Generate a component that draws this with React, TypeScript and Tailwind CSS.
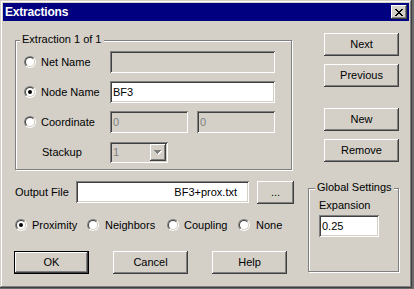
import React from "react";

const RAISED =
  "shadow-[inset_-1px_-1px_#404040,inset_1px_1px_#ffffff,inset_-2px_-2px_#808080,inset_2px_2px_#d4d0c8]";
const SUNKEN =
  "shadow-[inset_1px_1px_#808080,inset_-1px_-1px_#ffffff,inset_2px_2px_#404040,inset_-2px_-2px_#d4d0c8]";
const WINDOW =
  "shadow-[inset_-1px_-1px_#404040,inset_1px_1px_#d4d0c8,inset_-2px_-2px_#808080,inset_2px_2px_#ffffff]";
const ETCH = "shadow-[inset_1px_1px_#ffffff,1px_1px_#ffffff]";

function Radio({ checked = false }: { checked?: boolean }) {
  return (
    <div className="w-[12px] h-[12px] shrink-0 rounded-full border border-t-[#808080] border-l-[#808080] border-r-white border-b-white">
      <div className="w-full h-full rounded-full border border-t-[#404040] border-l-[#404040] border-r-[#d4d0c8] border-b-[#d4d0c8] bg-white flex items-center justify-center">
        {checked && <div className="w-[4px] h-[4px] rounded-full bg-black" />}
      </div>
    </div>
  );
}

function Btn({ label, w = "w-[75px]", def = false }: { label: string; w?: string; def?: boolean }) {
  return (
    <div
      className={`${w} h-[23px] flex items-center justify-center ${
        def ? "border border-black" : ""
      } ${RAISED}`}
    >
      <span>{label}</span>
    </div>
  );
}

function CloseX() {
  return (
    <svg width="8" height="7" viewBox="0 0 8 7" shapeRendering="crispEdges">
      <rect x="0" y="0" width="2" height="1" fill="#000" />
      <rect x="6" y="0" width="2" height="1" fill="#000" />
      <rect x="1" y="1" width="2" height="1" fill="#000" />
      <rect x="5" y="1" width="2" height="1" fill="#000" />
      <rect x="2" y="2" width="4" height="1" fill="#000" />
      <rect x="3" y="3" width="2" height="1" fill="#000" />
      <rect x="2" y="4" width="4" height="1" fill="#000" />
      <rect x="1" y="5" width="2" height="1" fill="#000" />
      <rect x="5" y="5" width="2" height="1" fill="#000" />
      <rect x="0" y="6" width="2" height="1" fill="#000" />
      <rect x="6" y="6" width="2" height="1" fill="#000" />
    </svg>
  );
}

function DownArrow() {
  return (
    <svg width="8" height="5" viewBox="0 0 8 5" shapeRendering="crispEdges">
      <rect x="1" y="1" width="7" height="1" fill="#fff" />
      <rect x="2" y="2" width="5" height="1" fill="#fff" />
      <rect x="3" y="3" width="3" height="1" fill="#fff" />
      <rect x="4" y="4" width="1" height="1" fill="#fff" />
      <rect x="0" y="0" width="7" height="1" fill="#808080" />
      <rect x="1" y="1" width="5" height="1" fill="#808080" />
      <rect x="2" y="2" width="3" height="1" fill="#808080" />
      <rect x="3" y="3" width="1" height="1" fill="#808080" />
    </svg>
  );
}

function RadioLabel({ label, checked = false }: { label: string; checked?: boolean }) {
  return (
    <div className="w-[86px] flex items-center gap-[5px]">
      <Radio checked={checked} />
      <span>{label}</span>
    </div>
  );
}

export default function App() {
  return (
    <div className="w-[414px] h-[289px] bg-[#6b6b6b] font-['Liberation_Sans',Arial,sans-serif] text-[11px] leading-[13px] text-black">
      <div className={`w-[412px] h-[288px] bg-[#d4d0c8] p-[3px] flex flex-col ${WINDOW}`}>
        {/* Title bar */}
        <div className="h-[18px] shrink-0 bg-[#000080] flex items-start justify-between">
          <span className="pl-[2px] pt-[2px] text-white font-bold text-[12px] leading-[14px] tracking-[-0.2px]">
            Extractions
          </span>
          <div className={`mt-[2px] mr-[2px] w-[16px] h-[14px] bg-[#d4d0c8] flex items-center justify-center ${RAISED}`}>
            <CloseX />
          </div>
        </div>

        <div className="flex flex-col pl-[12px]">
          {/* Top row */}
          <div className="flex mt-[12px]">
            <div className={`relative mt-[7px] w-[277px] h-[130px] border border-[#808080] ${ETCH}`}>
              <span className="absolute -top-[8px] left-[4px] px-[2px] bg-[#d4d0c8]">Extraction 1 of 1</span>
              <div className="flex flex-col pt-[10px] pl-[8px] gap-[8px]">
                <div className="flex items-center">
                  <RadioLabel label="Net Name" />
                  <div className={`w-[165px] h-[22px] bg-[#d4d0c8] ${SUNKEN}`} />
                </div>
                <div className="flex items-center">
                  <RadioLabel label="Node Name" checked />
                  <div className={`w-[165px] h-[22px] bg-white pl-[3px] flex items-center ${SUNKEN}`}>BF3</div>
                </div>
                <div className="flex items-center">
                  <RadioLabel label="Coordinate" />
                  <div className={`w-[78px] h-[22px] bg-[#d4d0c8] pl-[3px] flex items-center text-[#808080] ${SUNKEN}`}>0</div>
                  <div className={`ml-[9px] w-[78px] h-[22px] bg-[#d4d0c8] pl-[3px] flex items-center text-[#808080] ${SUNKEN}`}>0</div>
                </div>
                <div className="flex items-center mt-[1px]">
                  <div className="w-[86px] pl-[18px]">Stackup</div>
                  <div className={`w-[58px] h-[21px] bg-[#d4d0c8] pl-[3px] pr-[2px] flex items-center justify-between text-[#808080] ${SUNKEN}`}>
                    <span>1</span>
                    <div className={`w-[16px] h-[17px] bg-[#d4d0c8] flex items-center justify-center ${RAISED}`}>
                      <DownArrow />
                    </div>
                  </div>
                </div>
              </div>
            </div>

            <div className="ml-[32px] flex flex-col">
              <Btn label="Next" />
              <div className="mt-[8px]">
                <Btn label="Previous" />
              </div>
              <div className="mt-[21px]">
                <Btn label="New" />
              </div>
              <div className="mt-[8px]">
                <Btn label="Remove" />
              </div>
            </div>
          </div>

          {/* Bottom row */}
          <div className="flex">
            <div className="flex flex-col w-[279px]">
              <div className="mt-[11px] flex items-center h-[22px]">
                <span className="w-[61px]">Output File</span>
                <div className={`w-[173px] h-[22px] bg-white pr-[12px] flex items-center justify-end ${SUNKEN}`}>
                  BF3+prox.txt
                </div>
                <div className="ml-[8px]">
                  <Btn label="..." w="w-[37px]" />
                </div>
              </div>
              <div className="mt-[16px] flex h-[12px] items-center">
                <div className="w-[72px] flex items-center gap-[5px]">
                  <Radio checked />
                  <span>Proximity</span>
                </div>
                <div className="w-[80px] flex items-center gap-[6px]">
                  <Radio />
                  <span>Neighbors</span>
                </div>
                <div className="w-[71px] flex items-center gap-[5px]">
                  <Radio />
                  <span>Coupling</span>
                </div>
                <div className="flex items-center gap-[6px]">
                  <Radio />
                  <span>None</span>
                </div>
              </div>
              <div className="mt-[20px] -ml-[1px] flex gap-[24px]">
                <Btn label="OK" def />
                <Btn label="Cancel" />
                <Btn label="Help" />
              </div>
            </div>

            <div className={`relative ml-[14px] mt-[18px] w-[91px] h-[84px] border border-[#808080] ${ETCH}`}>
              <span className="absolute -top-[8px] left-[6px] px-[2px] bg-[#d4d0c8]">Global Settings</span>
              <div className="flex flex-col pl-[10px] pt-[10px]">
                <span>Expansion</span>
                <div className={`mt-[3px] w-[60px] h-[22px] bg-white pl-[3px] flex items-center ${SUNKEN}`}>0.25</div>
              </div>
            </div>
          </div>
        </div>
      </div>
    </div>
  );
}
